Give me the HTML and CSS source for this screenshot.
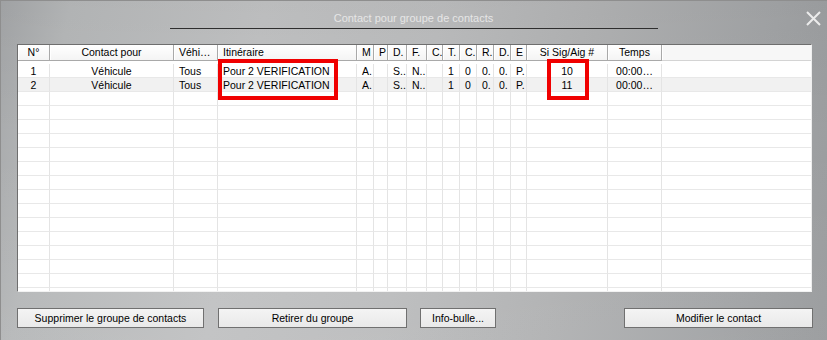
FILE: index.html
```html
<!DOCTYPE html>
<html lang="fr">
<head>
<meta charset="utf-8">
<title>Contact pour groupe de contacts</title>
<link rel="stylesheet" href="styles.css">
</head>
<body>
<div class="window">
  <div class="titlebar">
    <div class="title">Contact pour groupe de contacts</div>
    <svg class="close" width="15" height="15" viewBox="0 0 15 15" aria-label="Fermer">
      <path d="M1 1 L14 14 M14 1 L1 14" stroke="#ececec" stroke-width="2" fill="none"/>
    </svg>
  </div>

  <div class="grid">
    <div class="head cols">
      <div class="h ctr">N°</div>
      <div class="h ctr">Contact pour</div>
      <div class="h">Véhi…</div>
      <div class="h">Itinéraire</div>
      <div class="h">M</div>
      <div class="h">P</div>
      <div class="h">D.</div>
      <div class="h">F.</div>
      <div class="h">C.</div>
      <div class="h">T.</div>
      <div class="h">C.</div>
      <div class="h">R.</div>
      <div class="h">D.</div>
      <div class="h">E</div>
      <div class="h ctr">Si Sig/Aig #</div>
      <div class="h ctr">Temps</div>
      <div class="h last"></div>
    </div>
    <div class="body">
      <div class="row cols">
        <div class="d ctr">1</div><div class="d ctr">Véhicule</div><div class="d">Tous</div><div class="d">Pour 2 VERIFICATION</div><div class="d">A.</div><div class="d"></div><div class="d">S..</div><div class="d">N..</div><div class="d"></div><div class="d ctr">1</div><div class="d ctr">0</div><div class="d">0.</div><div class="d">0.</div><div class="d">P.</div><div class="d ctr">10</div><div class="d ctr">00:00…</div><div class="d last"></div>
      </div>
      <div class="row cols alt">
        <div class="d ctr">2</div><div class="d ctr">Véhicule</div><div class="d">Tous</div><div class="d">Pour 2 VERIFICATION</div><div class="d">A.</div><div class="d"></div><div class="d">S..</div><div class="d">N..</div><div class="d"></div><div class="d ctr">1</div><div class="d ctr">0</div><div class="d">0.</div><div class="d">0.</div><div class="d">P.</div><div class="d ctr">11</div><div class="d ctr">00:00…</div><div class="d last"></div>
      </div>
      <div class="row cols"><div class="d"></div><div class="d"></div><div class="d"></div><div class="d"></div><div class="d"></div><div class="d"></div><div class="d"></div><div class="d"></div><div class="d"></div><div class="d"></div><div class="d"></div><div class="d"></div><div class="d"></div><div class="d"></div><div class="d"></div><div class="d"></div><div class="d last"></div></div>
      <div class="row cols"><div class="d"></div><div class="d"></div><div class="d"></div><div class="d"></div><div class="d"></div><div class="d"></div><div class="d"></div><div class="d"></div><div class="d"></div><div class="d"></div><div class="d"></div><div class="d"></div><div class="d"></div><div class="d"></div><div class="d"></div><div class="d"></div><div class="d last"></div></div>
      <div class="row cols"><div class="d"></div><div class="d"></div><div class="d"></div><div class="d"></div><div class="d"></div><div class="d"></div><div class="d"></div><div class="d"></div><div class="d"></div><div class="d"></div><div class="d"></div><div class="d"></div><div class="d"></div><div class="d"></div><div class="d"></div><div class="d"></div><div class="d last"></div></div>
      <div class="row cols"><div class="d"></div><div class="d"></div><div class="d"></div><div class="d"></div><div class="d"></div><div class="d"></div><div class="d"></div><div class="d"></div><div class="d"></div><div class="d"></div><div class="d"></div><div class="d"></div><div class="d"></div><div class="d"></div><div class="d"></div><div class="d"></div><div class="d last"></div></div>
      <div class="row cols"><div class="d"></div><div class="d"></div><div class="d"></div><div class="d"></div><div class="d"></div><div class="d"></div><div class="d"></div><div class="d"></div><div class="d"></div><div class="d"></div><div class="d"></div><div class="d"></div><div class="d"></div><div class="d"></div><div class="d"></div><div class="d"></div><div class="d last"></div></div>
      <div class="row cols"><div class="d"></div><div class="d"></div><div class="d"></div><div class="d"></div><div class="d"></div><div class="d"></div><div class="d"></div><div class="d"></div><div class="d"></div><div class="d"></div><div class="d"></div><div class="d"></div><div class="d"></div><div class="d"></div><div class="d"></div><div class="d"></div><div class="d last"></div></div>
      <div class="row cols"><div class="d"></div><div class="d"></div><div class="d"></div><div class="d"></div><div class="d"></div><div class="d"></div><div class="d"></div><div class="d"></div><div class="d"></div><div class="d"></div><div class="d"></div><div class="d"></div><div class="d"></div><div class="d"></div><div class="d"></div><div class="d"></div><div class="d last"></div></div>
      <div class="row cols"><div class="d"></div><div class="d"></div><div class="d"></div><div class="d"></div><div class="d"></div><div class="d"></div><div class="d"></div><div class="d"></div><div class="d"></div><div class="d"></div><div class="d"></div><div class="d"></div><div class="d"></div><div class="d"></div><div class="d"></div><div class="d"></div><div class="d last"></div></div>
      <div class="row cols"><div class="d"></div><div class="d"></div><div class="d"></div><div class="d"></div><div class="d"></div><div class="d"></div><div class="d"></div><div class="d"></div><div class="d"></div><div class="d"></div><div class="d"></div><div class="d"></div><div class="d"></div><div class="d"></div><div class="d"></div><div class="d"></div><div class="d last"></div></div>
      <div class="row cols"><div class="d"></div><div class="d"></div><div class="d"></div><div class="d"></div><div class="d"></div><div class="d"></div><div class="d"></div><div class="d"></div><div class="d"></div><div class="d"></div><div class="d"></div><div class="d"></div><div class="d"></div><div class="d"></div><div class="d"></div><div class="d"></div><div class="d last"></div></div>
      <div class="row cols"><div class="d"></div><div class="d"></div><div class="d"></div><div class="d"></div><div class="d"></div><div class="d"></div><div class="d"></div><div class="d"></div><div class="d"></div><div class="d"></div><div class="d"></div><div class="d"></div><div class="d"></div><div class="d"></div><div class="d"></div><div class="d"></div><div class="d last"></div></div>
      <div class="row cols"><div class="d"></div><div class="d"></div><div class="d"></div><div class="d"></div><div class="d"></div><div class="d"></div><div class="d"></div><div class="d"></div><div class="d"></div><div class="d"></div><div class="d"></div><div class="d"></div><div class="d"></div><div class="d"></div><div class="d"></div><div class="d"></div><div class="d last"></div></div>
      <div class="row cols"><div class="d"></div><div class="d"></div><div class="d"></div><div class="d"></div><div class="d"></div><div class="d"></div><div class="d"></div><div class="d"></div><div class="d"></div><div class="d"></div><div class="d"></div><div class="d"></div><div class="d"></div><div class="d"></div><div class="d"></div><div class="d"></div><div class="d last"></div></div>
      <div class="row cols"><div class="d"></div><div class="d"></div><div class="d"></div><div class="d"></div><div class="d"></div><div class="d"></div><div class="d"></div><div class="d"></div><div class="d"></div><div class="d"></div><div class="d"></div><div class="d"></div><div class="d"></div><div class="d"></div><div class="d"></div><div class="d"></div><div class="d last"></div></div>
      <div class="row cols"><div class="d"></div><div class="d"></div><div class="d"></div><div class="d"></div><div class="d"></div><div class="d"></div><div class="d"></div><div class="d"></div><div class="d"></div><div class="d"></div><div class="d"></div><div class="d"></div><div class="d"></div><div class="d"></div><div class="d"></div><div class="d"></div><div class="d last"></div></div>
    </div>
    <div class="mark mark-itin"></div>
    <div class="mark mark-sig"></div>
  </div>

  <div class="buttons">
    <button class="btn btn-del">Supprimer le groupe de contacts</button>
    <button class="btn btn-out">Retirer du groupe</button>
    <button class="btn btn-info">Info-bulle...</button>
    <button class="btn btn-mod">Modifier le contact</button>
  </div>
</div>
</body>
</html>
```

FILE: styles.css
```css
html, body {
  margin: 0;
  padding: 0;
}
body {
  width: 827px;
  height: 340px;
  overflow: hidden;
  font-family: "Liberation Sans", Arial, sans-serif;
  font-size: 10.5px;
  color: #000;
}
.window {
  width: 827px;
  height: 340px;
  box-sizing: border-box;
  background:
    linear-gradient(180deg, rgba(0,0,0,0.03) 0%, rgba(0,0,0,0) 40%, rgba(255,255,255,0.04) 100%),
    linear-gradient(100deg, #a4a6a8 0%, #b6b8b9 8%, #c1c2c3 30%, #bcbdbe 50%, #b1b2b3 68%, #a2a4a6 88%, #999b9d 100%);
  box-shadow: inset 1px 1px 0 #8e8e8e;
}
.titlebar {
  height: 44px;
  display: grid;
  grid-template-columns: 1fr 488px 1fr;
}
.title {
  grid-column: 2;
  margin-top: 11px;
  line-height: 14px;
  height: 14px;
  padding-bottom: 3px;
  border-bottom: 1px solid #2e2e2e;
  text-align: center;
  font-size: 11px;
  color: #e6e6e6;
}
.close {
  grid-column: 3;
  justify-self: end;
  align-self: start;
  margin-top: 11px;
  margin-right: 6px;
}
.grid {
  position: relative;
  margin-left: 17px;
  width: 795px;
  height: 248px;
  box-sizing: border-box;
  border: 1px solid;
  border-color: #6e6e6e #eeeeee #f2f2f2 #6e6e6e;
  background: #fff;
  overflow: hidden;
}
.cols {
  display: grid;
  grid-template-columns: 32px 124px 44px 139px 17px 14px 19px 20px 16px 17px 17px 17px 17px 16px 81px 54px 1fr;
}
.head {
  height: 16px;
}
.h {
  box-sizing: border-box;
  height: 16px;
  line-height: 15px;
  padding: 0 0 0 5px;
  white-space: nowrap;
  overflow: hidden;
  background: linear-gradient(#ffffff, #f4f4f4);
  border-right: 1px solid #a9a9a9;
  border-bottom: 1px solid #a9a9a9;
  box-shadow: inset 1px 0 0 #ffffff;
}
.h.ctr {
  text-align: center;
  padding: 0;
}
.h.last {
  border-right: none;
  background: #f7f7f7;
  border-bottom-color: #d4d4d4;
}
.body {
  padding-top: 3px;
}
.row {
  height: 14px;
}
.row.alt {
  background: #f1f1f1;
}
.d {
  box-sizing: border-box;
  height: 14px;
  line-height: 14px;
  padding: 0 0 0 5px;
  white-space: nowrap;
  overflow: hidden;
  border-right: 1px solid #e4e4e4;
  border-bottom: 1px solid #e8e8e8;
}
.d.ctr {
  text-align: center;
  padding: 0;
}
.d.last {
  border-right: none;
}
.mark {
  position: absolute;
  box-sizing: border-box;
  border: 4px solid #f00000;
  top: 14px;
  height: 41px;
}
.mark-itin {
  left: 200px;
  width: 120px;
}
.mark-sig {
  left: 529px;
  width: 42px;
}
.buttons {
  display: flex;
  margin-top: 16px;
  padding: 0 14px 0 17px;
}
.btn {
  height: 20px;
  box-sizing: border-box;
  margin: 0;
  padding: 0;
  border: 1px solid #707070;
  border-radius: 0;
  background: linear-gradient(#f4f4f4, #e9e9e9);
  font-family: "Liberation Sans", Arial, sans-serif;
  font-size: 10.5px;
  color: #000;
  text-align: center;
  line-height: 18px;
}
.btn-del { width: 187px; }
.btn-out { width: 189px; margin-left: 14px; }
.btn-info { width: 76px; margin-left: 13px; }
.btn-mod { width: 189px; margin-left: auto; }
```
